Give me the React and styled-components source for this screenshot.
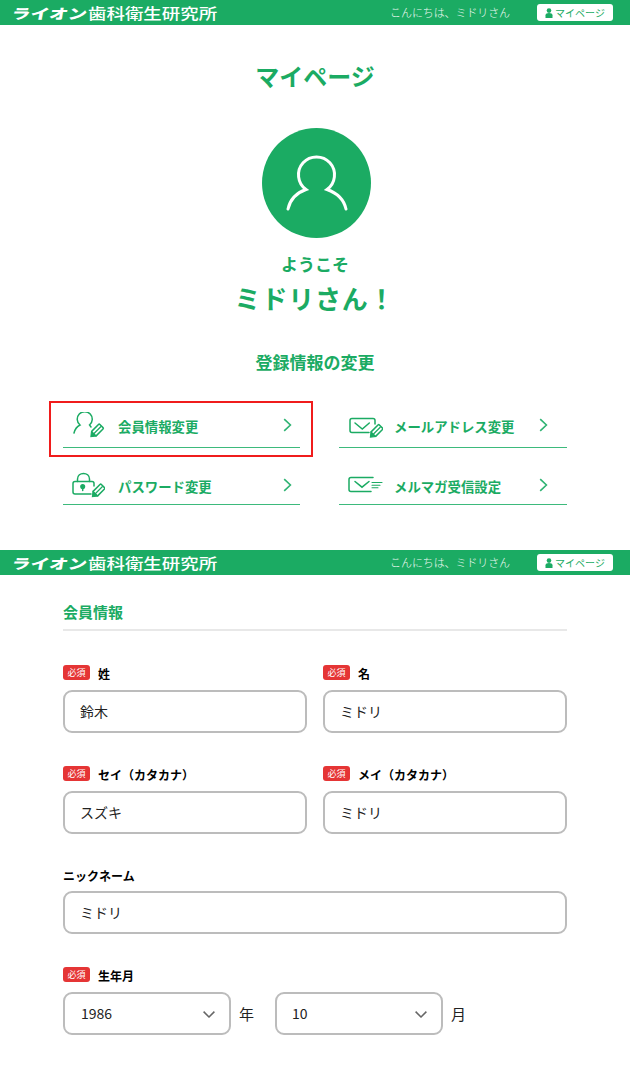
import styled, { createGlobalStyle } from "styled-components";

const GREEN = "#1bab63";
const FONT = `"Noto Sans CJK JP", "Noto Sans", sans-serif`;

const GlobalStyle = createGlobalStyle`
  html, body { margin: 0; padding: 0; background: #fff; }
  body { font-family: ${FONT}; color: #000; }
  * { box-sizing: border-box; }
`;

const Page = styled.div`
  width: 630px;
  height: 1079px;
  overflow: hidden;
`;

const Header = styled.header`
  height: 25px;
  background: ${GREEN};
  display: flex;
  align-items: center;
  padding: 0 17px 0 12px;
  color: #fff;
`;

const Logo = styled.div`
  display: flex;
  align-items: center;
  width: 206px;
  line-height: 1;
  white-space: nowrap;
`;

const LogoMark = styled.span`
  flex: none;
  width: 76px;
  font-size: 14px;
  font-weight: 900;
  transform-origin: left center;
  transform: scaleX(1.34) skewX(-8deg);
`;

const LogoName = styled.span`
  flex: none;
  font-size: 15px;
  font-weight: 500;
  transform-origin: left center;
  transform: scaleX(1.23);
`;

const Greeting = styled.div`
  margin: 0 0 2px auto;
  font-size: 11px;
  font-weight: 300;
  letter-spacing: -0.1px;
  opacity: 0.92;
`;

const MyPageButton = styled.a`
  margin-left: 27px;
  width: 76px;
  height: 17px;
  border-radius: 3px;
  background: #fff;
  color: ${GREEN};
  font-size: 10px;
  display: flex;
  align-items: center;
  justify-content: center;
  gap: 2px;
`;

const Hero = styled.section`
  height: 525px;
  display: flex;
  flex-direction: column;
  align-items: center;
  color: ${GREEN};
`;

const Title = styled.h1`
  margin: 33px 0 0;
  font-size: 24px;
  line-height: 36px;
  font-weight: 700;
`;

const Avatar = styled.div`
  width: 109px;
  height: 110px;
  margin: 34px 0 0 3px;
  border-radius: 50%;
  background: ${GREEN};
  display: flex;
  align-items: center;
  justify-content: center;
`;

const Welcome = styled.p`
  margin: 14px 0 0 0;
  font-size: 17px;
  line-height: 24px;
  font-weight: 700;
`;

const UserName = styled.p`
  margin: 2px 0 0 0;
  font-size: 26px;
  line-height: 40px;
  font-weight: 700;
  letter-spacing: 0.8px;
`;

const SubTitle = styled.h2`
  margin: 30px 0 0 0;
  font-size: 17px;
  line-height: 28px;
  font-weight: 700;
`;

const Menu = styled.nav`
  margin: 15px 0 0 63px;
  width: 504px;
  display: grid;
  grid-template-columns: 237px 228px;
  column-gap: 39px;
  grid-auto-rows: 57px;
  align-self: flex-start;
`;

const MenuItem = styled.a`
  position: relative;
  display: flex;
  align-items: center;
  align-self: end;
  height: 44px;
  padding: ${(p) => p.$top}px 0 2px;
  border-bottom: 1px solid #3dba7c;
  font-size: 13.4px;
  font-weight: 700;
  color: ${GREEN};

  ${(p) =>
    p.$selected &&
    `&::after {
      content: "";
      position: absolute;
      left: -14px;
      right: -13px;
      top: -3px;
      bottom: -10px;
      border: 2px solid #f01c1c;
    }`}
`;

const MenuIcon = styled.span`
  width: ${(p) => p.$width}px;
  display: flex;
  flex: none;
  margin-left: ${(p) => p.$left}px;
`;

const MenuLabel = styled.span`
  flex: 1;
  padding-top: 2px;
`;

const Arrow = styled.svg`
  flex: none;
  margin-right: ${(p) => p.$right}px;
`;

const Form = styled.section`
  padding: 25px 63px 0;
`;

const SectionTitle = styled.h3`
  margin: 0 0 34px;
  height: 31px;
  font-size: 15px;
  line-height: 24px;
  font-weight: 700;
  color: ${GREEN};
  border-bottom: 2px solid #e8e8e8;
`;

const Row = styled.div`
  display: grid;
  grid-template-columns: ${(p) => (p.$single ? "1fr" : "244px 244px")};
  column-gap: 16px;
  margin-bottom: 33px;
`;

const LabelLine = styled.div`
  display: flex;
  align-items: flex-start;
  height: ${(p) => (p.$plain ? 24 : 25)}px;
  gap: 8px;
  font-size: 12px;
  font-weight: 700;
  line-height: 18px;
`;

const Required = styled.span`
  width: 27px;
  height: 15px;
  border-radius: 3px;
  background: #e53535;
  color: #fff;
  font-size: 9px;
  font-weight: 400;
  line-height: 15px;
  text-align: center;
`;

const TextInput = styled.input`
  display: block;
  width: 100%;
  height: 43px;
  padding: 0 15px 2px;
  border: 2px solid #bcbcbc;
  border-radius: 9px;
  background: #fff;
  font-family: ${FONT};
  font-size: 14px;
  color: #222;
  outline: none;
`;

const DateLine = styled.div`
  display: flex;
  align-items: center;
  font-size: 15px;
  color: #222;
`;

const SelectWrap = styled.div`
  position: relative;
  width: 168px;
  height: 43px;
  svg {
    position: absolute;
    right: 16px;
    top: 19px;
    pointer-events: none;
  }
`;

const Select = styled.select`
  appearance: none;
  width: 100%;
  height: 100%;
  padding: 0 0 2px ${(p) => p.$pad}px;
  border: 2px solid #bcbcbc;
  border-radius: 9px;
  background: #fff;
  font-family: ${FONT};
  font-size: 14px;
  color: #222;
  outline: none;
`;

const Unit = styled.span`
  margin: 0 ${(p) => p.$right}px 0 8px;
`;

const Pencil = ({ x, y }) => (
  <g transform={`translate(${x} ${y}) rotate(45)`}>
    <rect x="-3.2" y="-7" width="6.4" height="11" rx="1" fill="none" stroke="#1bab63" strokeWidth="1.5" />
    <path d="M-3.2 4 L0 8 L3.2 4 Z" fill="#1bab63" stroke="#1bab63" strokeWidth="1" />
    <path d="M0 -6 V3.5" stroke="#1bab63" strokeWidth="1.2" />
  </g>
);

const UserEditIcon = () => (
  <svg width="32" height="26" viewBox="0 0 32 26" fill="none" stroke="#1bab63" strokeWidth="1.5" strokeLinecap="round">
    <path d="M1 21 C2 17 4 14.5 7 13 A7.5 7.5 0 1 1 16.5 13 L18 15" />
    <Pencil x={23.5} y={19} />
  </svg>
);

const LockEditIcon = () => (
  <svg width="33" height="26" viewBox="0 0 33 26" fill="none" stroke="#1bab63" strokeWidth="1.5" strokeLinecap="round">
    <path d="M5.5 9.5 V7 C5.5 -0.5 17.5 -0.5 17.5 7 V9.5" />
    <path d="M19 22 H3 C1.8 22 1 21.2 1 20 V11.5 C1 10.3 1.8 9.5 3 9.5 H20 C21.2 9.5 22 10.3 22 11.5 V14" />
    <circle cx="10.7" cy="14.5" r="1.8" fill="#1bab63" />
    <path d="M10.7 15 V18.5" />
    <Pencil x={26} y={19} />
  </svg>
);

const MailEditIcon = () => (
  <svg width="34" height="26" viewBox="0 0 34 26" fill="none" stroke="#1bab63" strokeWidth="1.5" strokeLinecap="round">
    <path d="M20 20.5 H3 C1.8 20.5 1 19.7 1 18.5 V8.5 C1 7.3 1.8 6.5 3 6.5 H24 C25.2 6.5 26 7.3 26 8.5 V12" />
    <path d="M6 11 L13.3 17 L20.3 11" />
    <Pencil x={27} y={19.5} />
  </svg>
);

const MailListIcon = () => (
  <svg width="35" height="18" viewBox="0 0 35 18" fill="none" stroke="#1bab63" strokeWidth="1.5" strokeLinecap="round">
    <path d="M23 15.5 H3 C1.8 15.5 1 14.7 1 13.5 V3.5 C1 2.3 1.8 1.5 3 1.5 H25" />
    <path d="M7 5.5 L14 11.2 L21 5.5" />
    <path d="M24 6.5 H34 M24 9.2 H32 M24 11.8 H30" strokeWidth="1.1" />
  </svg>
);

const ChevronRight = ({ right }) => (
  <Arrow $right={right} width="9" height="14" viewBox="0 0 9 14" fill="none" stroke="#2fb373" strokeWidth="1.6">
    <path d="M1.2 1.2 L7.4 7 L1.2 12.8" />
  </Arrow>
);

const SiteHeader = () => (
  <Header>
    <Logo>
      <LogoMark>ライオン</LogoMark>
      <LogoName>歯科衛生研究所</LogoName>
    </Logo>
    <Greeting>こんにちは、ミドリさん</Greeting>
    <MyPageButton>
      <svg width="8" height="10" viewBox="0 0 8 10" fill="#1bab63">
        <circle cx="4" cy="2.6" r="2.3" />
        <path d="M0.5 10 V7.2 C0.5 5.8 2 5 4 5 C6 5 7.5 5.8 7.5 7.2 V10 Z" />
      </svg>
      マイページ
    </MyPageButton>
  </Header>
);

const menu = [
  { label: "会員情報変更", Icon: UserEditIcon, width: 45, left: 10, right: 8, top: 0, selected: true },
  { label: "メールアドレス変更", Icon: MailEditIcon, width: 45, left: 10, right: 19, top: 0 },
  { label: "パスワード変更", Icon: LockEditIcon, width: 46, left: 9, right: 8, top: 6 },
  { label: "メルマガ受信設定", Icon: MailListIcon, width: 46, left: 9, right: 19, top: 6 },
];

const Field = ({ label, value, required }) => (
  <div>
    <LabelLine $plain={!required}>
      {required && <Required>必須</Required>}
      {label}
    </LabelLine>
    <TextInput defaultValue={value} readOnly />
  </div>
);

const DateSelect = ({ value, pad }) => (
  <SelectWrap>
    <Select $pad={pad} defaultValue={value}>
      <option>{value}</option>
    </Select>
    <svg width="12" height="7" viewBox="0 0 12 7" fill="none" stroke="#666" strokeWidth="1.5">
      <path d="M0.6 0.6 L6 6 L11.4 0.6" />
    </svg>
  </SelectWrap>
);

export default function App() {
  return (
    <Page>
      <GlobalStyle />
      <SiteHeader />
      <Hero>
        <Title>マイページ</Title>
        <Avatar>
          <svg width="62" height="58" viewBox="0 0 62 58" fill="none" stroke="#fff" strokeWidth="3" strokeLinecap="round">
            <path d="M2 55 C4 46 10 39 20 35.5 A18 18 0 1 1 41 35.5 C51 39 58 46 60 55" />
          </svg>
        </Avatar>
        <Welcome>ようこそ</Welcome>
        <UserName>ミドリさん！</UserName>
        <SubTitle>登録情報の変更</SubTitle>
        <Menu>
          {menu.map(({ label, Icon, width, left, right, top, selected }) => (
            <MenuItem key={label} $selected={selected} $top={top}>
              <MenuIcon $width={width} $left={left}>
                <Icon />
              </MenuIcon>
              <MenuLabel>{label}</MenuLabel>
              <ChevronRight right={right} />
            </MenuItem>
          ))}
        </Menu>
      </Hero>
      <SiteHeader />
      <Form>
        <SectionTitle>会員情報</SectionTitle>
        <Row>
          <Field label="姓" value="鈴木" required />
          <Field label="名" value="ミドリ" required />
        </Row>
        <Row>
          <Field label="セイ（カタカナ）" value="スズキ" required />
          <Field label="メイ（カタカナ）" value="ミドリ" required />
        </Row>
        <Row $single>
          <Field label="ニックネーム" value="ミドリ" />
        </Row>
        <LabelLine>
          <Required>必須</Required>
          生年月
        </LabelLine>
        <DateLine>
          <DateSelect value="1986" pad={16} />
          <Unit $right={21}>年</Unit>
          <DateSelect value="10" pad={15} />
          <Unit $right={0}>月</Unit>
        </DateLine>
      </Form>
    </Page>
  );
}
